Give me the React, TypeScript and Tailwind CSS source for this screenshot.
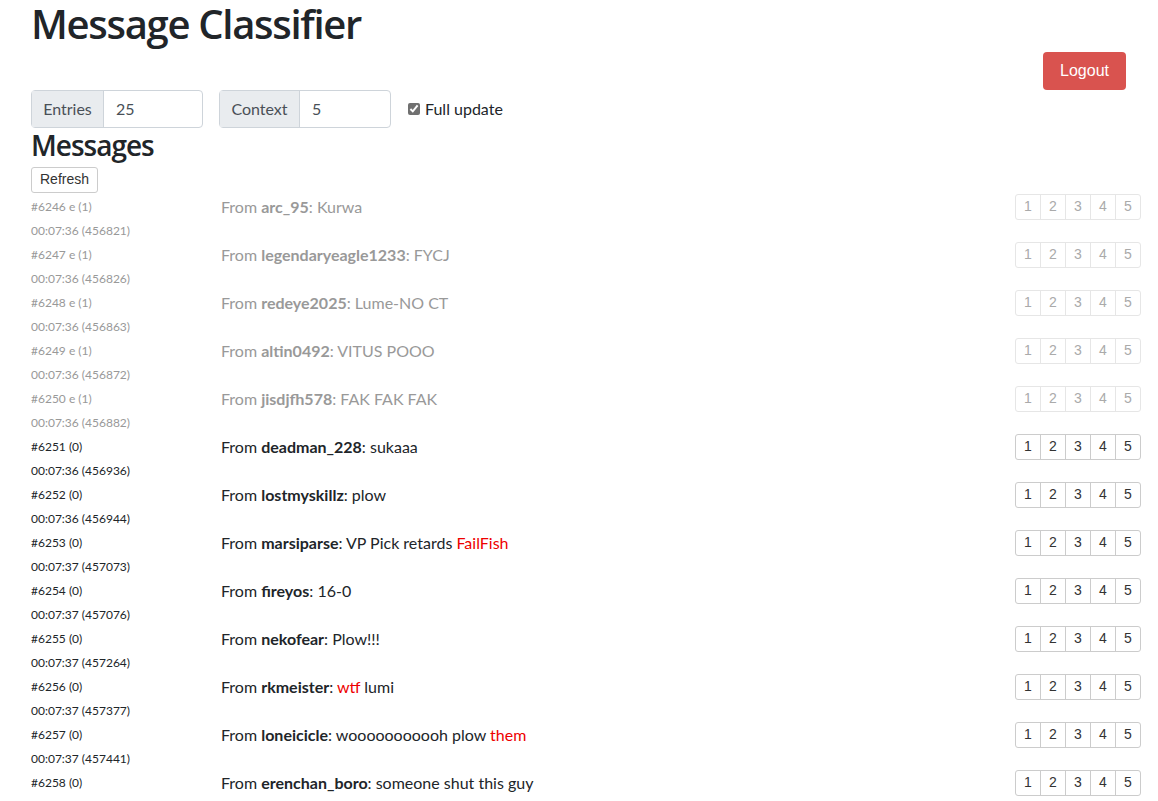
import React from "react";

type Msg = {
  id: number;
  flag: string;
  time: string;
  tick: number;
  user: string;
  parts: { t: string; red?: boolean }[];
  old: boolean;
};

const msgs: Msg[] = [
  { id: 6246, flag: "e (1)", time: "00:07:36", tick: 456821, user: "arc_95", parts: [{ t: "Kurwa" }], old: true },
  { id: 6247, flag: "e (1)", time: "00:07:36", tick: 456826, user: "legendaryeagle1233", parts: [{ t: "FYCJ" }], old: true },
  { id: 6248, flag: "e (1)", time: "00:07:36", tick: 456863, user: "redeye2025", parts: [{ t: "Lume-NO CT" }], old: true },
  { id: 6249, flag: "e (1)", time: "00:07:36", tick: 456872, user: "altin0492", parts: [{ t: "VITUS POOO" }], old: true },
  { id: 6250, flag: "e (1)", time: "00:07:36", tick: 456882, user: "jisdjfh578", parts: [{ t: "FAK FAK FAK" }], old: true },
  { id: 6251, flag: "(0)", time: "00:07:36", tick: 456936, user: "deadman_228", parts: [{ t: "sukaaa" }], old: false },
  { id: 6252, flag: "(0)", time: "00:07:36", tick: 456944, user: "lostmyskillz", parts: [{ t: "plow" }], old: false },
  {
    id: 6253,
    flag: "(0)",
    time: "00:07:37",
    tick: 457073,
    user: "marsiparse",
    parts: [{ t: "VP Pick retards " }, { t: "FailFish", red: true }],
    old: false,
  },
  { id: 6254, flag: "(0)", time: "00:07:37", tick: 457076, user: "fireyos", parts: [{ t: "16-0" }], old: false },
  { id: 6255, flag: "(0)", time: "00:07:37", tick: 457264, user: "nekofear", parts: [{ t: "Plow!!!" }], old: false },
  {
    id: 6256,
    flag: "(0)",
    time: "00:07:37",
    tick: 457377,
    user: "rkmeister",
    parts: [{ t: "wtf", red: true }, { t: " lumi" }],
    old: false,
  },
  {
    id: 6257,
    flag: "(0)",
    time: "00:07:37",
    tick: 457441,
    user: "loneicicle",
    parts: [{ t: "wooooooooooh plow " }, { t: "them", red: true }],
    old: false,
  },
  { id: 6258, flag: "(0)", time: "00:07:37", tick: 457523, user: "erenchan_boro", parts: [{ t: "someone shut this guy" }], old: false },
];

function Rating({ old }: { old: boolean }) {
  return (
    <div
      className={`flex h-[26px] overflow-hidden rounded-[3px] border font-['Liberation_Sans',Arial,sans-serif] text-[14px] ${
        old ? "border-[#e6e6e6] text-[#aaa]" : "border-[#ccc] text-[#333]"
      }`}
    >
      {[1, 2, 3, 4, 5].map((n) => (
        <button
          key={n}
          className={`flex items-center justify-center ${n > 1 ? "w-[25px] border-l" : "w-[24px]"} ${
            old ? "border-[#e6e6e6]" : "border-[#ccc]"
          }`}
        >
          {n}
        </button>
      ))}
    </div>
  );
}

export default function App() {
  return (
    <div className="min-h-screen bg-white pl-[31px] pr-[17px] font-['Lato','Open_Sans',sans-serif] text-[#212529]">
      <h1 className="mb-[4px] font-['Open_Sans',sans-serif] text-[40px] font-semibold leading-[48px] tracking-[-1.3px]">
        Message Classifier
      </h1>
      <div className="flex justify-end pr-[15px]">
        <button className="h-[38px] w-[83px] rounded-[4px] bg-[#d9534f] font-['Liberation_Sans',Arial,sans-serif] text-[16px] text-white">
          Logout
        </button>
      </div>
      <div className="flex h-[38px] items-center text-[16px]">
        <div className="flex h-[38px] w-[172px] rounded-[4px] border border-[#ced4da]">
          <span className="flex w-[72px] items-center justify-center border-r border-[#ced4da] bg-[#e9ecef] text-[#495057]">Entries</span>
          <span className="flex items-center pl-[12px] text-[#495057]">25</span>
        </div>
        <div className="ml-[16px] flex h-[38px] w-[172px] rounded-[4px] border border-[#ced4da]">
          <span className="flex w-[80px] items-center justify-center border-r border-[#ced4da] bg-[#e9ecef] text-[#495057]">Context</span>
          <span className="flex items-center pl-[12px] text-[#495057]">5</span>
        </div>
        <label className="ml-[17px] flex items-center gap-[5px]">
          <input type="checkbox" defaultChecked className="h-[12px] w-[12px] accent-[#707070]" />
          <span>Full update</span>
        </label>
      </div>
      <h2 className="mt-[1px] mb-[4px] font-['Open_Sans',sans-serif] text-[28px] font-semibold leading-[33px] tracking-[-1px]">
        Messages
      </h2>
      <button className="h-[26px] rounded-[3px] border border-[#ccc] px-[8px] font-['Liberation_Sans',Arial,sans-serif] text-[14px] text-[#333]">
        Refresh
      </button>
      <div className="mt-[2px]">
        {msgs.map((m) => (
          <div key={m.id} className="flex h-[48px] items-start">
            <div className={`w-[190px] text-[12px] leading-[24px] ${m.old ? "text-[#999]" : "text-[#212529]"}`}>
              <div>
                #{m.id} {m.flag}
              </div>
              <div>
                {m.time} ({m.tick})
              </div>
            </div>
            <div className={`flex-1 text-[16px] leading-[24px] ${m.old ? "text-[#999]" : "text-[#212529]"}`}>
              From <b className="font-bold">{m.user}</b>:{" "}
              {m.parts.map((p, i) => (
                <span key={i} className={p.red ? "text-[#e00]" : ""}>
                  {p.t}
                </span>
              ))}
            </div>
            <div className="-mt-[1px]">
              <Rating old={m.old} />
            </div>
          </div>
        ))}
      </div>
    </div>
  );
}
